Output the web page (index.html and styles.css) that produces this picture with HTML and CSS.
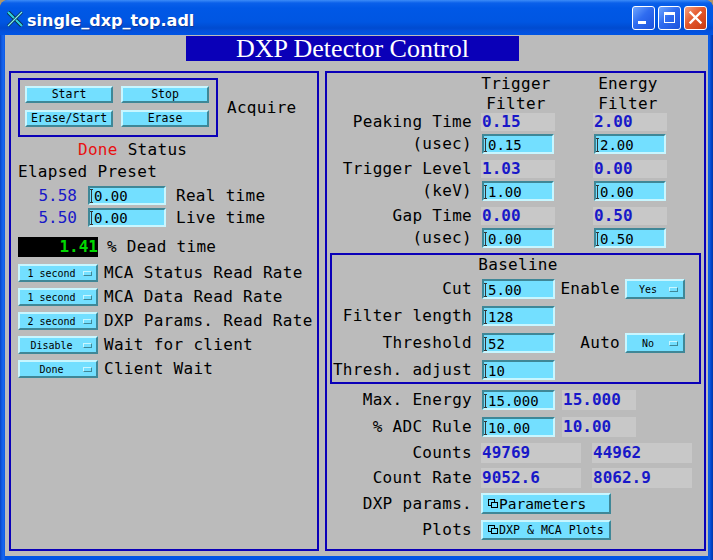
FILE: index.html
```html
<!DOCTYPE html>
<html>
<head>
<meta charset="utf-8">
<title>single_dxp_top.adl</title>
<link rel="stylesheet" href="styles.css">
</head>
<body>
<div class="win">
  <div class="titlebar">
    <svg class="xicon" width="16" height="16" viewBox="0 0 16 16">
      <path d="M1 1 L15 15" stroke="#0a2a40" stroke-width="4"/>
      <path d="M1 1 L15 15" stroke="#2fd0dc" stroke-width="2.2"/>
      <path d="M15 1 L1 15" stroke="#0a2a40" stroke-width="2.6"/>
      <path d="M15 1 L1 15" stroke="#80f0f0" stroke-width="1.2"/>
    </svg>
    <span class="title">single_dxp_top.adl</span>
    <div class="wbtns">
      <div class="wb blue">
        <svg width="21" height="22" viewBox="0 0 21 22"><rect x="5" y="14" width="8" height="3" fill="#fff"/></svg>
      </div>
      <div class="wb blue">
        <svg width="21" height="22" viewBox="0 0 21 22"><rect x="5.5" y="5.5" width="10" height="10" fill="none" stroke="#fff" stroke-width="1"/><rect x="5" y="5" width="11" height="3" fill="#fff"/></svg>
      </div>
      <div class="wb red">
        <svg width="21" height="22" viewBox="0 0 21 22"><path d="M5.5 5.5 L15.5 15.5 M15.5 5.5 L5.5 15.5" stroke="#fff" stroke-width="2.4" stroke-linecap="square"/></svg>
      </div>
    </div>
  </div>
  <div class="content">
    <div class="header">DXP Detector Control</div>
    <div class="panels">
      <div class="panel left">
        <div class="acq">
          <div class="acqbox">
            <div class="btn">Start</div>
            <div class="btn">Stop</div>
            <div class="btn">Erase/Start</div>
            <div class="btn">Erase</div>
          </div>
          <div class="lbl acqlbl">Acquire</div>
        </div>
        <div class="lbl status"><span class="red">Done</span> Status</div>
        <div class="lbl elapsed">Elapsed Preset</div>
        <div class="trow first">
          <div class="val">5.58</div>
          <div class="inp tin"><i class="cur"></i>0.00</div>
          <div class="lbl tlbl">Real time</div>
        </div>
        <div class="trow">
          <div class="val">5.50</div>
          <div class="inp tin"><i class="cur"></i>0.00</div>
          <div class="lbl tlbl">Live time</div>
        </div>
        <div class="drow">
          <div class="dead">1.41</div>
          <div class="lbl dlbl">% Dead time</div>
        </div>
        <div class="mrow first">
          <div class="menu"><span class="mtxt">1 second</span><span class="mind"></span></div>
          <div class="lbl mlbl">MCA Status Read Rate</div>
        </div>
        <div class="mrow">
          <div class="menu"><span class="mtxt">1 second</span><span class="mind"></span></div>
          <div class="lbl mlbl">MCA Data Read Rate</div>
        </div>
        <div class="mrow">
          <div class="menu"><span class="mtxt">2 second</span><span class="mind"></span></div>
          <div class="lbl mlbl">DXP Params. Read Rate</div>
        </div>
        <div class="mrow">
          <div class="menu"><span class="mtxt">Disable</span><span class="mind"></span></div>
          <div class="lbl mlbl">Wait for client</div>
        </div>
        <div class="mrow">
          <div class="menu"><span class="mtxt">Done</span><span class="mind"></span></div>
          <div class="lbl mlbl">Client Wait</div>
        </div>
      </div>

      <div class="panel right">
        <div class="rhead">
          <div class="hcol lbl">Trigger<br>Filter</div>
          <div class="hcol lbl hc2">Energy<br>Filter</div>
        </div>

        <div class="rr rbrow first">
          <div class="lbl rl">Peaking Time</div>
          <div class="rb c1">0.15</div>
          <div class="rb c2">2.00</div>
        </div>
        <div class="rr inrow">
          <div class="lbl rl">(usec)</div>
          <div class="inp fin i1"><i class="cur"></i>0.15</div>
          <div class="inp fin i2"><i class="cur"></i>2.00</div>
        </div>
        <div class="rr rbrow">
          <div class="lbl rl">Trigger Level</div>
          <div class="rb c1">1.03</div>
          <div class="rb c2">0.00</div>
        </div>
        <div class="rr inrow">
          <div class="lbl rl">(keV)</div>
          <div class="inp fin i1"><i class="cur"></i>1.00</div>
          <div class="inp fin i2"><i class="cur"></i>0.00</div>
        </div>
        <div class="rr rbrow">
          <div class="lbl rl">Gap Time</div>
          <div class="rb c1">0.00</div>
          <div class="rb c2">0.50</div>
        </div>
        <div class="rr inrow">
          <div class="lbl rl">(usec)</div>
          <div class="inp fin i1"><i class="cur"></i>0.00</div>
          <div class="inp fin i2"><i class="cur"></i>0.50</div>
        </div>

        <div class="bbox">
          <div class="lbl btitle">Baseline</div>
          <div class="brow first">
            <div class="lbl bl">Cut</div>
            <div class="inp fin i1"><i class="cur"></i>5.00</div>
            <div class="lbl bl2">Enable</div>
            <div class="menu bmenu"><span class="mtxt">Yes</span><span class="mind"></span></div>
          </div>
          <div class="brow">
            <div class="lbl bl">Filter length</div>
            <div class="inp fin i1"><i class="cur"></i>128</div>
          </div>
          <div class="brow">
            <div class="lbl bl">Threshold</div>
            <div class="inp fin i1"><i class="cur"></i>52</div>
            <div class="lbl bl2">Auto</div>
            <div class="menu bmenu"><span class="mtxt">No</span><span class="mind"></span></div>
          </div>
          <div class="brow">
            <div class="lbl bl">Thresh. adjust</div>
            <div class="inp fin i1"><i class="cur"></i>10</div>
          </div>
        </div>

        <div class="rr lrow m6">
          <div class="lbl rl">Max. Energy</div>
          <div class="inp fin i1"><i class="cur"></i>15.000</div>
          <div class="rb tall c3">15.000</div>
        </div>
        <div class="rr lrow m7">
          <div class="lbl rl">% ADC Rule</div>
          <div class="inp fin i1"><i class="cur"></i>10.00</div>
          <div class="rb tall c3">10.00</div>
        </div>
        <div class="rr lrow m6">
          <div class="lbl rl">Counts</div>
          <div class="rb tall wide c1">49769</div>
          <div class="rb tall wide c4">44962</div>
        </div>
        <div class="rr lrow m5">
          <div class="lbl rl">Count Rate</div>
          <div class="rb tall wide c1">9052.6</div>
          <div class="rb tall wide c4">8062.9</div>
        </div>
        <div class="rr lrow rdrow m5">
          <div class="lbl rl">DXP params.</div>
          <div class="rd big">
            <svg class="rdi" width="11" height="10" viewBox="0 0 11 10"><rect x="0.5" y="0.5" width="6" height="6" fill="none" stroke="#000"/><rect x="3.5" y="3.5" width="6" height="5" fill="#73dfff" stroke="#000"/></svg>
            <span>Parameters</span>
          </div>
        </div>
        <div class="rr lrow m6">
          <div class="lbl rl">Plots</div>
          <div class="rd small">
            <svg class="rdi" width="11" height="10" viewBox="0 0 11 10"><rect x="0.5" y="0.5" width="6" height="6" fill="none" stroke="#000"/><rect x="3.5" y="3.5" width="6" height="5" fill="#73dfff" stroke="#000"/></svg>
            <span>DXP &amp; MCA Plots</span>
          </div>
        </div>
      </div>
    </div>
  </div>
</div>
</body>
</html>
```
FILE: styles.css
```css
* { box-sizing: border-box; }
html, body { margin: 0; padding: 0; }
body {
  width: 713px;
  height: 560px;
  overflow: hidden;
  background: #b0966a;
  font-family: "DejaVu Sans Mono", monospace;
}
.win {
  width: 713px;
  height: 560px;
  display: flex;
  flex-direction: column;
  border-radius: 8px 8px 0 0;
  overflow: hidden;
  background: linear-gradient(to right, #0842c0 0, #0f5ee8 2px, #1a66ee 4px, #0055e5 5px, #0055e5 708px, #1462e8 709px, #0048d0 711px, #0038a8 713px);
}
.titlebar {
  height: 35px;
  flex: none;
  display: flex;
  align-items: flex-start;
  background: linear-gradient(to bottom, #3c8cf8 0px, #0a60ea 3px, #0058e6 8px, #0056e2 22px, #004bd0 28px, #0450dc 31px, #0055e5 35px);
}
.xicon { margin: 11px 0 0 7px; flex: none; }
.title {
  margin: 11px 0 0 4px;
  font-family: "DejaVu Sans", sans-serif;
  font-weight: bold;
  font-size: 16px;
  line-height: 19px;
  color: #fff;
  text-shadow: 1px 1px 0 #0a3aa0;
}
.wbtns {
  margin: 6px 6px 0 auto;
  display: flex;
  gap: 3px;
}
.wb {
  width: 23px;
  height: 24px;
  border: 1px solid #fff;
  border-radius: 3px;
}
.wb svg { display: block; }
.wb.blue { background: linear-gradient(135deg, #6ea6ff 0%, #2f6cf0 45%, #1c52dc 100%); }
.wb.red { background: linear-gradient(135deg, #f5a080 0%, #e4582c 45%, #c83a12 100%); }

.content {
  flex: 1;
  margin: 0 5px 4px 5px;
  background: #bbbbbb;
}
.header {
  margin: 1px 0 0 181px;
  width: 333px;
  height: 25px;
  background: #0a00b8;
  color: #fff;
  font-family: "Liberation Serif", serif;
  font-size: 26px;
  line-height: 25px;
  text-align: center;
}
.panels {
  display: flex;
  gap: 6px;
  margin-top: 10px;
  padding-left: 4px;
}
.panel {
  border: 2px solid #0a00b8;
  height: 480px;
}
.left { width: 310px; }
.right { width: 381px; }

.lbl {
  font-size: 16px;
  line-height: 18px;
  letter-spacing: 0.3px;
  color: #000;
  white-space: nowrap;
}
.red { color: #e81010; }

/* left panel */
.acq { display: flex; align-items: center; margin: 5px 0 0 7px; }
.acqbox {
  width: 200px;
  height: 59px;
  border: 2px solid #0a00b8;
  padding: 6px 0 0 5px;
  display: grid;
  grid-template-columns: 88px 88px;
  grid-auto-rows: 17px;
  gap: 7px 8px;
  align-content: start;
}
.btn {
  background: #73dfff;
  border: 2px solid;
  border-color: #c8f6ff #3f8797 #3f8797 #c8f6ff;
  font-size: 11.5px;
  line-height: 1;
  display: flex;
  align-items: center;
  justify-content: center;
}
.acqlbl { margin-left: 9px; }
.status { margin: 4px 0 0 67px; }
.elapsed { margin: 4px 0 0 7px; }
.trow { display: flex; align-items: center; height: 19px; margin: 3px 0 0 7px; }
.trow.first { margin-top: 5px; }
.val {
  width: 59px;
  text-align: right;
  font-size: 16px;
  color: #1818c8;
}
.inp {
  background: #73dfff;
  border: 2px solid;
  border-color: #3f8797 #c8f6ff #c8f6ff #3f8797;
  font-size: 14px;
  display: flex;
  align-items: center;
  padding: 1px 0 0 0;
  color: #000;
  white-space: nowrap;
}
.cur {
  display: block;
  width: 3px;
  height: 14px;
  margin: 0 1px 0 0;
  background:
    linear-gradient(#333, #333) center / 1px 100% no-repeat,
    linear-gradient(#333, #333) top / 3px 1px no-repeat,
    linear-gradient(#333, #333) bottom / 3px 1px no-repeat;
}
.tin { width: 78px; height: 19px; margin-left: 11px; }
.tlbl { margin-left: 10px; }
.drow { display: flex; align-items: center; margin: 10px 0 0 7px; height: 20px; }
.dead {
  width: 80px;
  height: 20px;
  background: #000;
  color: #00d800;
  font-weight: bold;
  font-size: 16px;
  line-height: 20px;
  text-align: right;
}
.dlbl { margin-left: 9px; }
.mrow { display: flex; align-items: center; height: 18px; margin: 6px 0 0 7px; }
.mrow.first { margin-top: 7px; }
.menu {
  width: 80px;
  height: 18px;
  background: #73dfff;
  border: 2px solid;
  border-color: #c8f6ff #3f8797 #3f8797 #c8f6ff;
  display: flex;
  align-items: center;
  font-size: 10px;
}
.mtxt { flex: 1; text-align: center; white-space: nowrap; }
.mind {
  width: 9px;
  height: 5px;
  margin-right: 4px;
  background: #73dfff;
  border: 1px solid;
  border-color: #c8f6ff #3f8797 #3f8797 #c8f6ff;
}
.mlbl { margin-left: 6px; }

/* right panel */
.rhead { display: flex; margin: 1px 0 0 152px; height: 39px; }
.hcol { width: 74px; text-align: center; line-height: 20px; }
.hc2 { margin-left: 38px; }
.rr { display: flex; align-items: center; }
.rl { width: 145px; text-align: right; }
.rbrow { height: 18px; margin-top: 6px; }
.rbrow.first { margin-top: 0; }
.inrow { height: 20px; margin-top: 3px; }
.rb {
  height: 18px;
  width: 74px;
  background: #c8c8c8;
  color: #1818c8;
  font-weight: bold;
  font-size: 16px;
  line-height: 18px;
  padding-left: 1px;
  white-space: nowrap;
}
.rb.tall { height: 20px; line-height: 20px; }
.rb.wide { width: 100px; }
.c1 { margin-left: 9px; }
.c2 { margin-left: 38px; }
.c3 { margin-left: 7px; }
.c4 { margin-left: 11px; }
.fin { width: 72px; height: 20px; }
.i1 { margin-left: 10px; }
.i2 { margin-left: 40px; }

.bbox {
  margin: 5px 0 0 3px;
  width: 371px;
  height: 131px;
  border: 2px solid #0a00b8;
}
.btitle { text-align: center; margin-top: 1px; padding-left: 5px; }
.brow { display: flex; align-items: center; height: 20px; margin-top: 7px; }
.brow.first { margin-top: 5px; }
.bl { width: 140px; text-align: right; }
.brow .fin { width: 73px; }
.bl2 { width: 65px; text-align: right; }
.bmenu { width: 60px; height: 20px; margin-left: 5px; }
.bmenu .mind { margin-right: 5px; }

.lrow { height: 20px; }
.lrow .fin { width: 73px; }
.m5 { margin-top: 5px; }
.m6 { margin-top: 6px; }
.m7 { margin-top: 7px; }
.rdrow { height: 21px; }
.rd {
  margin-left: 9px;
  width: 130px;
  height: 21px;
  background: #73dfff;
  border: 2px solid;
  border-color: #c8f6ff #3f8797 #3f8797 #c8f6ff;
  display: flex;
  align-items: center;
  padding-left: 5px;
  white-space: nowrap;
}
.rd.small { height: 20px; }
.rdi { flex: none; }
.rd.big span { font-size: 14.5px; margin-left: 0; }
.rd.small span { font-size: 11.6px; margin-left: 0; }
```
